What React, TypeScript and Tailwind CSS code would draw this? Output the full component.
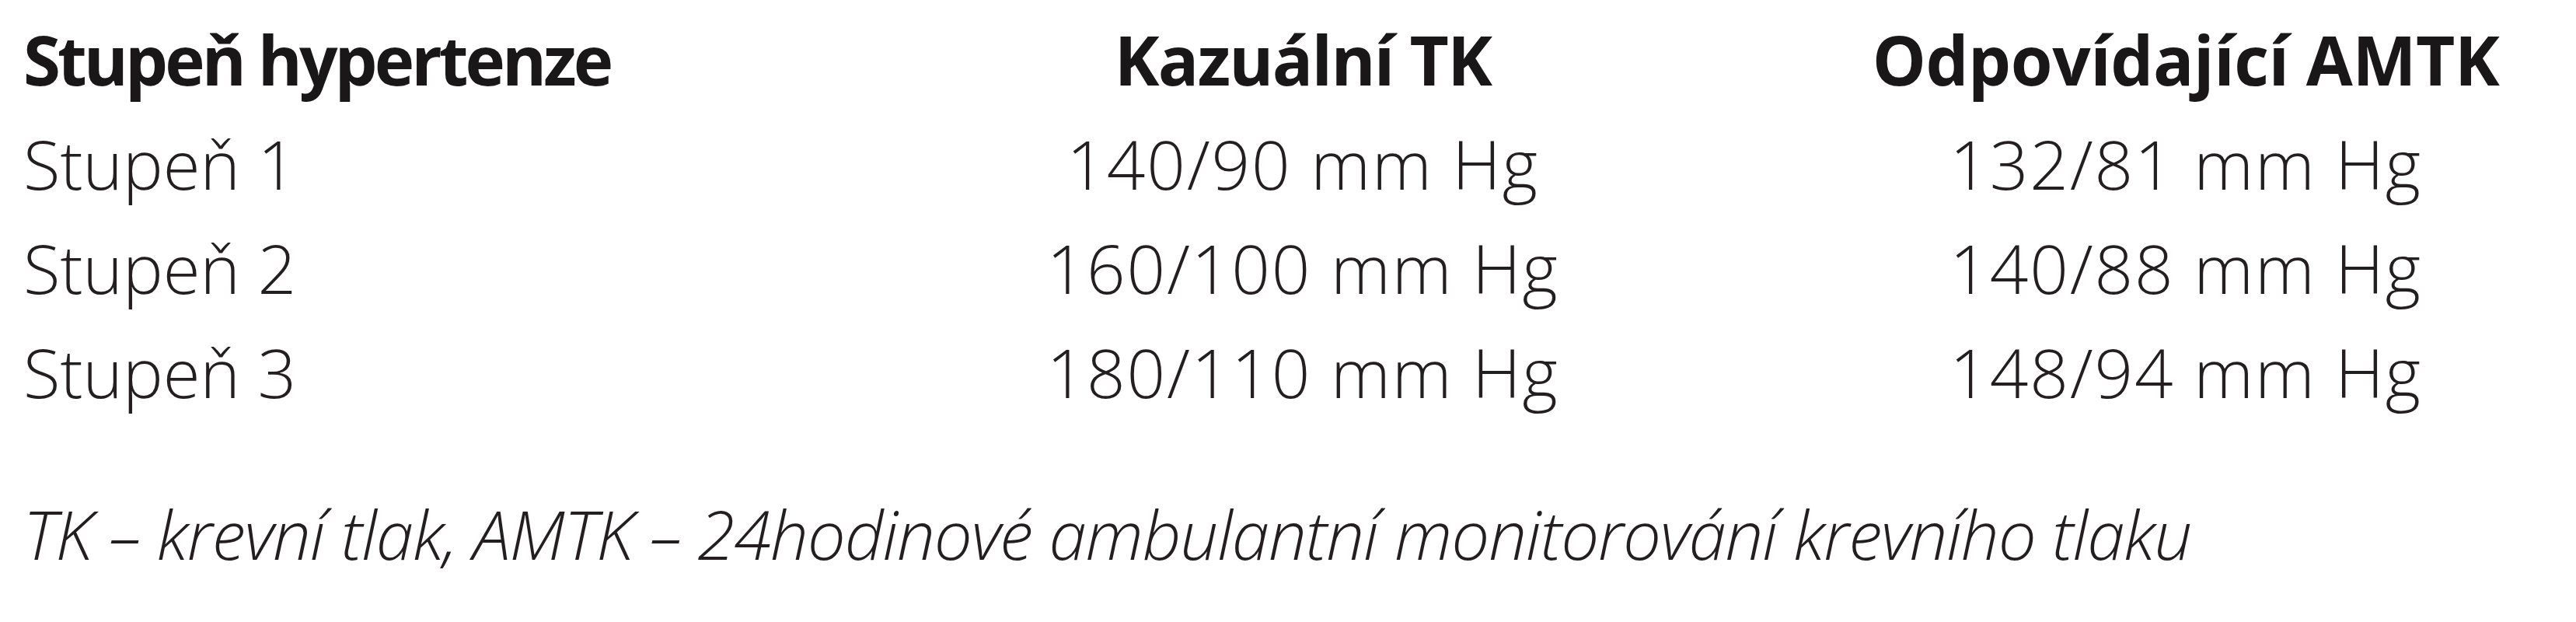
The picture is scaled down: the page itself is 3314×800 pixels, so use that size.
import React from "react";

const rows = [
  ["Stupeň 1", "140/90 mm Hg", "132/81 mm Hg"],
  ["Stupeň 2", "160/100 mm Hg", "140/88 mm Hg"],
  ["Stupeň 3", "180/110 mm Hg", "148/94 mm Hg"],
];

export default function App() {
  return (
    <div className="w-[3314px] h-[800px] bg-white text-[#231f20] font-['Open_Sans','Noto_Sans',sans-serif] pl-[30px] pt-[9px]">
      <div className="grid grid-cols-[950px_1392px_880px] text-[87px] leading-[134px]">
        <div className="font-bold [font-stretch:90%] tracking-[-0.045em] text-[#1a1718]">Stupeň hypertenze</div>
        <div className="font-bold [font-stretch:90%] tracking-[-0.02em] text-center text-[#1a1718]">Kazuální TK</div>
        <div className="font-bold [font-stretch:90%] tracking-[-0.005em] text-center text-[#1a1718]">Odpovídající AMTK</div>
        {rows.map((r) => (
          <React.Fragment key={r[0]}>
            <div className="font-light">{r[0]}</div>
            <div className="font-light tracking-[0.022em] text-center">{r[1]}</div>
            <div className="font-light tracking-[0.022em] text-center">{r[2]}</div>
          </React.Fragment>
        ))}
      </div>
      <div className="mt-[74px] text-[87px] leading-[134px] italic font-light [font-stretch:88%] tracking-[-0.013em]">
        TK – krevní tlak, AMTK – 24hodinové ambulantní monitorování krevního tlaku
      </div>
    </div>
  );
}
